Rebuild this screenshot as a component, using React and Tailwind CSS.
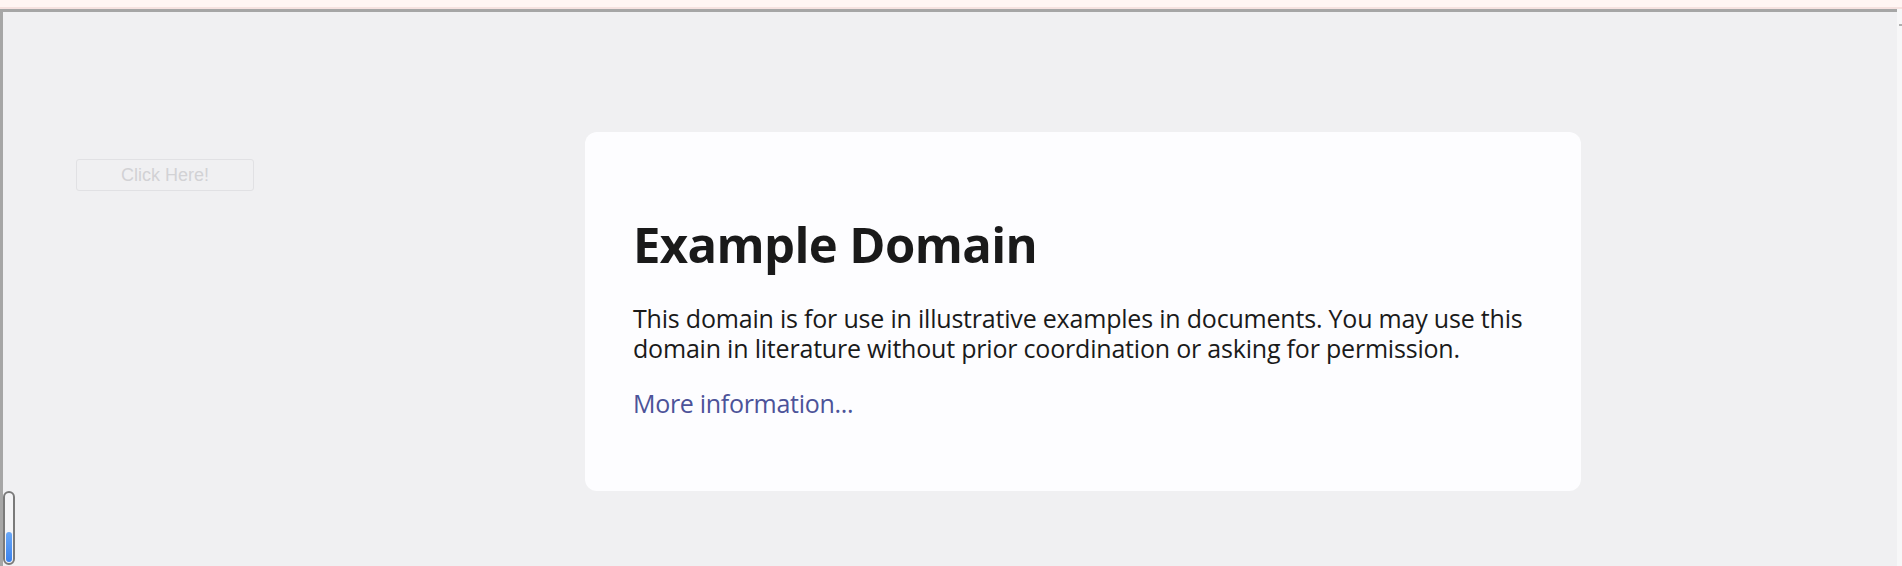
export default function App() {
  return (
    <div className="w-[1902px] h-[566px] overflow-hidden bg-[#f7f7f8] flex flex-col">
      {/* browser top strip */}
      <div className="h-[7px] bg-[#fff5f3] shrink-0" />
      <div className="h-[2px] bg-[#f6e2e0] shrink-0" />
      <div className="flex flex-1 min-h-0">
        <div className="w-[1897px] h-full border-t-[3px] border-l-[3px] border-[#a6a6a6] bg-[#f0f0f2] flex flex-col">
          <div className="flex items-start pt-[120px]">
            <button className="ml-[73px] mt-[27px] w-[178px] h-[32px] border border-[#e1e1e4] rounded-[3px] text-[18px] text-[#d2d2d5] font-['Liberation_Sans',Arial,sans-serif] leading-none">
              Click Here!
            </button>
            <div className="ml-[331px] w-[996px] h-[359px] bg-[#fdfdff] rounded-[12px] px-[48px] pt-[80px] font-['Open_Sans','Noto_Sans',sans-serif] text-[#1a1a1a]">
              <h1 className="text-[49px] font-bold leading-[64px] tracking-[-0.6px]">Example Domain</h1>
              <p className="mt-[27px] text-[25px] leading-[30px] tracking-[-0.2px]">
                This domain is for use in illustrative examples in documents. You may use this
                <br />
                domain in literature without prior coordination or asking for permission.
              </p>
              <p className="mt-[25px] text-[25px] leading-[30px] tracking-[-0.3px]">
                <a href="#" className="text-[#4c5399]">More information...</a>
              </p>
            </div>
          </div>
          <div className="mt-auto mb-[1px] w-[12px] h-[75px] rounded-full border-2 border-[#7a7a7a] bg-[#f4f4f6] flex flex-col justify-end p-[1px]">
            <div className="h-[30px] w-full rounded-full bg-gradient-to-b from-[#6aa8f7] to-[#3a82ee]" />
          </div>
        </div>
        <div className="flex-1 relative">
          <div className="mt-[15px] w-[3px] h-[2px] bg-[#b0b0b0] ml-auto" />
        </div>
      </div>
    </div>
  );
}
